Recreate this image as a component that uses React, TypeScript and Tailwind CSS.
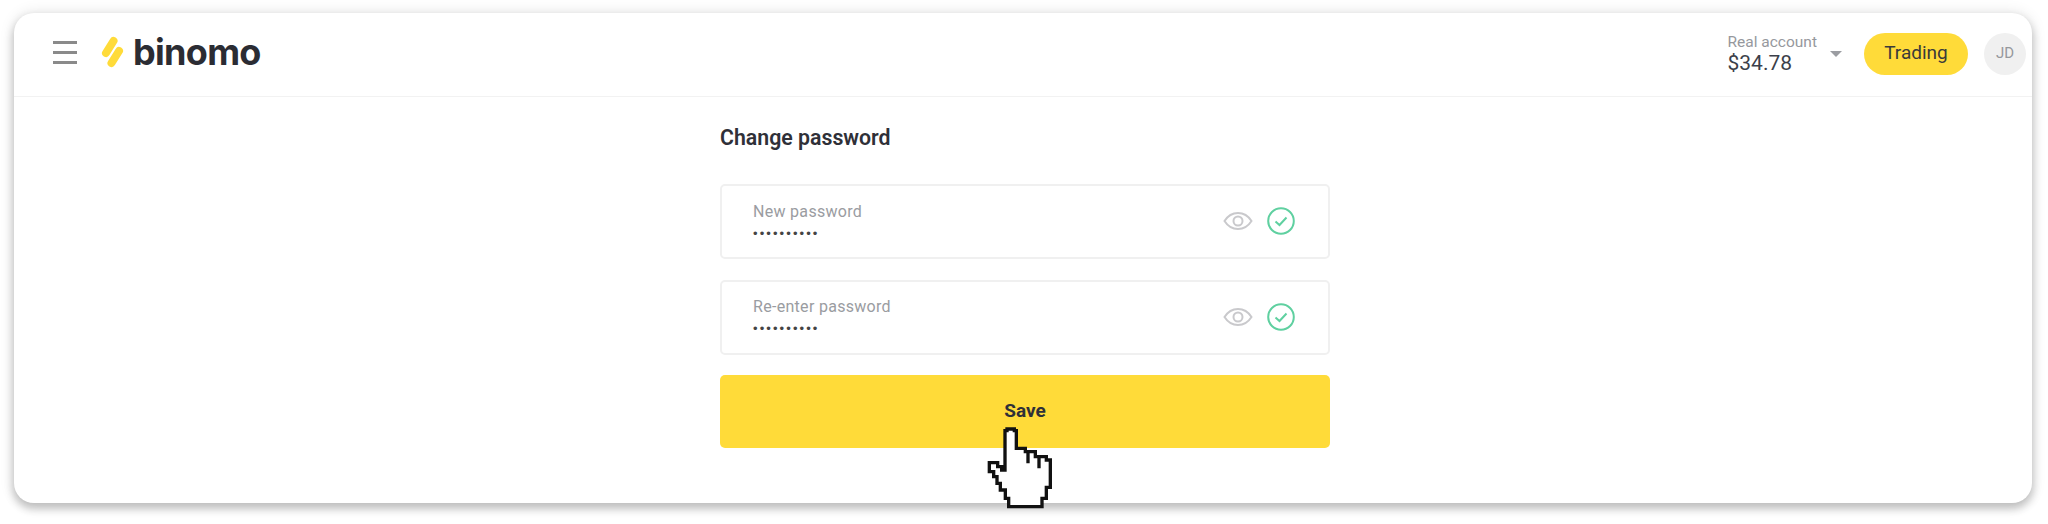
const roboto = "font-['Roboto',sans-serif]";

function Eye() {
  return (
    <svg width="30" height="20" viewBox="0 0 30 20" fill="none" stroke="#c9c9cc" strokeWidth="2">
      <path d="M1.5 10C5 4.5 9.5 2 15 2s10 2.5 13.5 8C25 15.500 20.500 18 15 18S5 15.500 1.500 10Z" />
      <circle cx="15" cy="10" r="4.500" />
    </svg>
  );
}

function Check() {
  return (
    <svg width="28" height="28" viewBox="0 0 28 28" fill="none" stroke="#5fd0a0" strokeWidth="2">
      <circle cx="14" cy="14" r="12.800" />
      <path d="M8.500 14.500l4 3.500 7-7.500" />
    </svg>
  );
}

function PasswordField({ label }: { label: string }) {
  return (
    <div className="flex h-[75px] items-center justify-between rounded-[5px] border-2 border-[#f0f0f0] bg-white pl-[31px] pr-[33px]">
      <div className="flex flex-col">
        <span className="text-[16px] leading-[20px] tracking-[0.3px] text-[#9a9ca1]">{label}</span>
        <span className="mt-[4px] text-[13px] leading-[16px] tracking-[2.1px] text-[#444] font-['Liberation_Sans',sans-serif]">
          ••••••••••
        </span>
      </div>
      <div className="flex items-center gap-[14px] pb-[1px]">
        <Eye />
        <Check />
      </div>
    </div>
  );
}

function Cursor() {
  return (
    <svg
      className="absolute left-[987px] top-[426px]"
      width="67"
      height="84"
      viewBox="80 78 201 252"
      fill="#fff"
      stroke="#111"
      strokeWidth="10"
    >
      <path d="M134 210V92H140V87H162V92H168V145H195V155H225V170H258V180H270V262H258V295H245V320H145V295H135V270H120V250H110V230H100V215H87V188H112V200H124V210Z" />
      <path d="M203 155V190M236 170V205" fill="none" />
    </svg>
  );
}

export default function App() {
  return (
    <div className={`relative h-[524px] overflow-hidden bg-white pl-[14px] pr-4 pt-[13px] ${roboto}`}>
      <div className="h-[490px] rounded-[20px] bg-white shadow-[0_5px_8px_1px_rgba(0,0,0,0.22),0_0_14px_2px_rgba(0,0,0,0.08)]">
        <header className="flex h-[84px] items-center border-b border-[#f2f2f2] pl-[39px] pr-[6px]">
          <div className="mb-[5px] flex h-[23px] w-[24px] flex-col justify-between">
            <span className="h-[3px] bg-[#8a8a8a]" />
            <span className="h-[3px] bg-[#8a8a8a]" />
            <span className="h-[3px] bg-[#8a8a8a]" />
          </div>
          <svg className="mb-[5px] ml-[24px]" width="23" height="32" viewBox="0 0 23 32" stroke="#ffdb39" strokeWidth="8" strokeLinecap="round">
            <path d="M12.500 5L5 17" />
            <path d="M18 15L10.500 27" />
          </svg>
          <span className="mb-[5px] ml-[9px] font-['Inter',sans-serif] text-[36px] font-bold leading-none tracking-[-0.7px] text-[#2b2c33]">
            binomo
          </span>
          <div className="mb-[2px] ml-auto flex items-center">
            <div className="flex flex-col">
              <span className="text-[15.500px] leading-[18px] text-[#96989d]">Real account</span>
              <span className="text-[21px] leading-[24px] text-[#3c3f4a]">$34.78</span>
            </div>
            <span className="ml-[13px] h-0 w-0 border-x-[6px] border-t-[6px] border-x-transparent border-t-[#9b9da2]" />
            <button className="ml-[22px] flex h-[42px] w-[104px] items-center justify-center rounded-full bg-[#ffdb39] text-[19px] text-[#3a3a3a]">
              Trading
            </button>
            <div className="ml-4 flex h-[42px] w-[42px] items-center justify-center rounded-full bg-[#f0f0f0] text-[15px] text-[#96989d]">
              JD
            </div>
          </div>
        </header>
        <main className="ml-[706px] w-[610px] pt-[28px]">
          <h1 className="text-[21.300px] font-semibold leading-[25px] text-[#2f3038]">Change password</h1>
          <div className="mt-[34px] flex flex-col gap-[20.500px]">
            <PasswordField label="New password" />
            <PasswordField label="Re-enter password" />
            <button className="h-[73px] rounded-[5px] bg-[#ffdb39] text-[19px] font-bold text-[#2f3038]">Save</button>
          </div>
        </main>
      </div>
      <Cursor />
    </div>
  );
}
